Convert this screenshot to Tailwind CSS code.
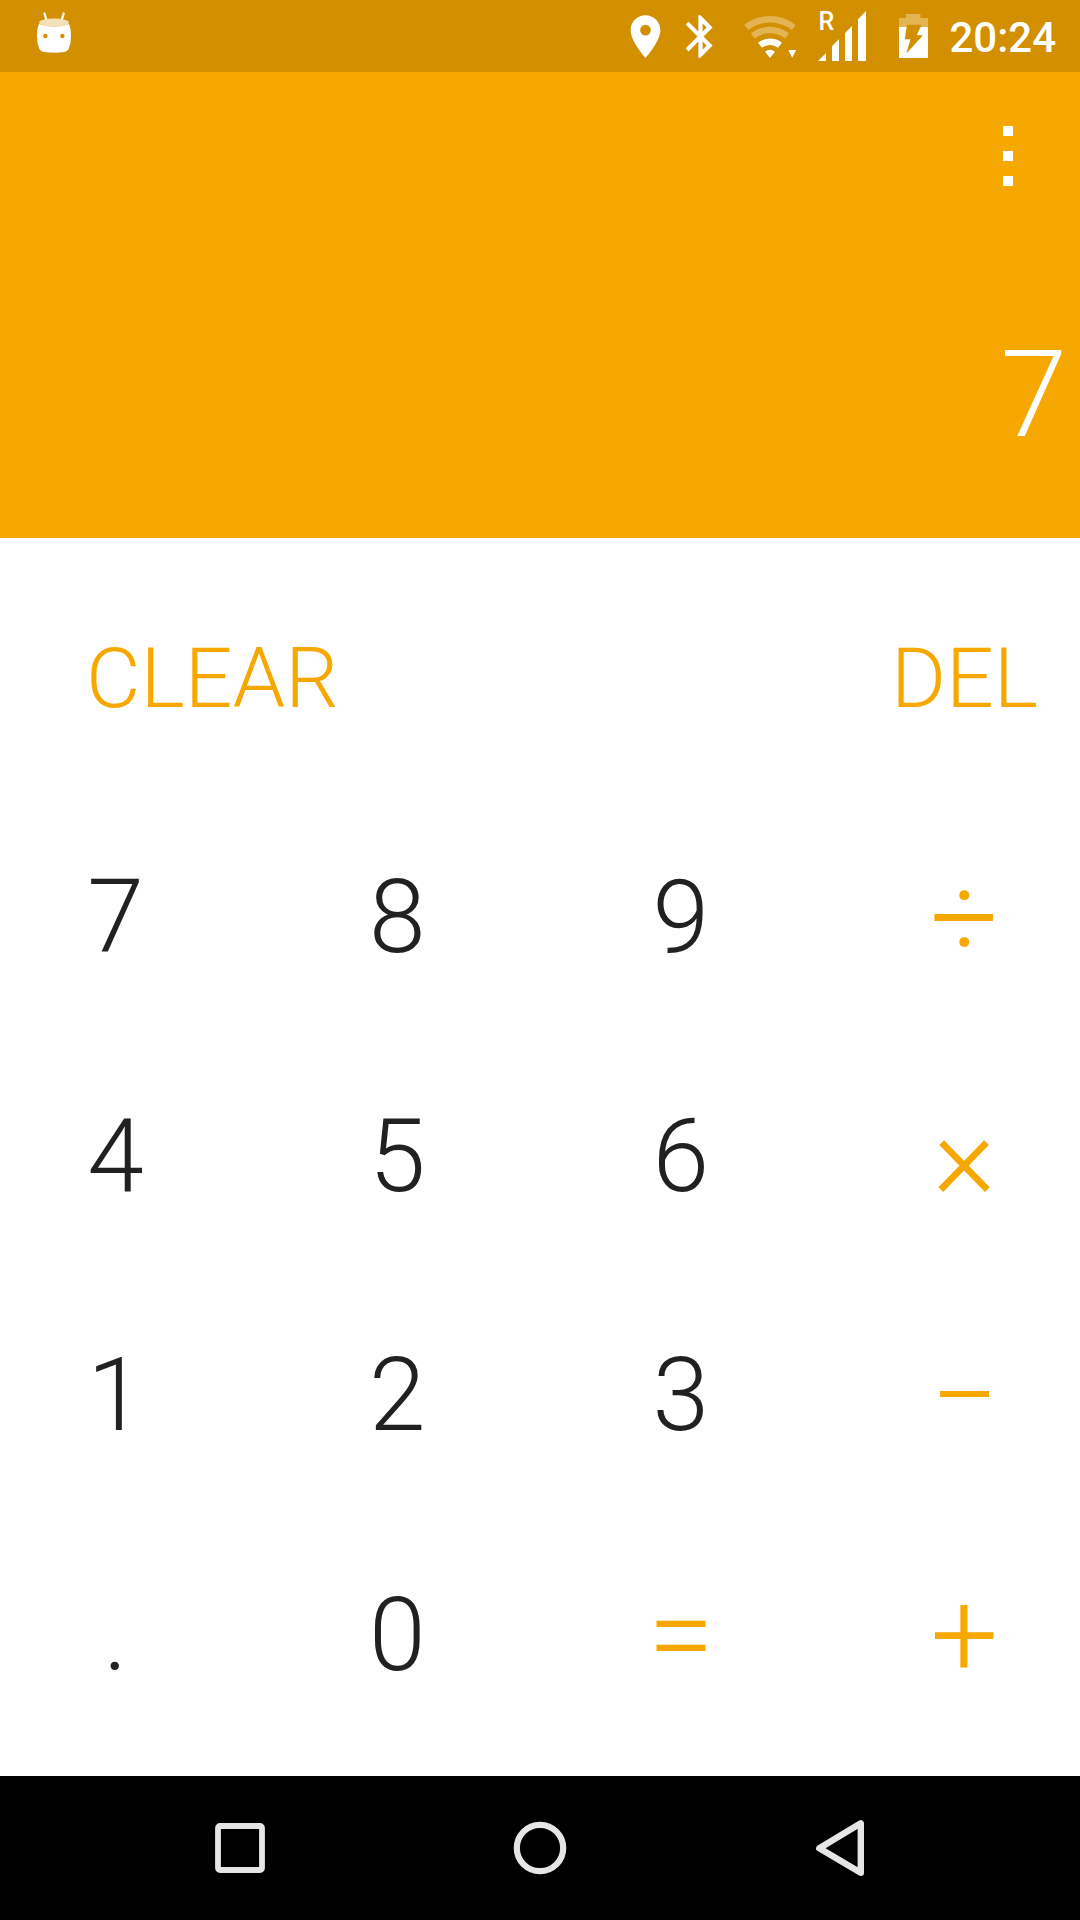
<!DOCTYPE html>
<html lang="en">
<head>
<meta charset="utf-8">
<title>Calculator</title>
<script src="https://cdn.jsdelivr.net/npm/@tailwindcss/browser@4"></script>
</head>
<body class="bg-white">
<div class="flex h-[1920px] w-[1080px] flex-col overflow-hidden font-['Roboto',sans-serif] text-[#212121]">
  <!-- Status bar -->
  <header class="flex h-[72px] shrink-0 items-start bg-[#d28f00] text-white">
    <svg class="ml-[36px] h-[72px] w-[36px]" viewBox="36 0 36 72">
      <path d="M44.5 13.5l2.4 8M63.7 13.5l-2.4 8" stroke="#fff" stroke-width="2.2" stroke-linecap="round"/>
      <path d="M39 24Q54 29 69 24Q71 28 71 36Q71 43 69 48Q68 51 64 52Q54 53.5 44 52Q40 51 39 48Q37 43 37 36Q37 28 39 24Z" fill="#fff"/>
      <ellipse cx="54" cy="22.6" rx="15" ry="4" fill="#f3e0ba"/>
      <circle cx="45.4" cy="36" r="2.2" fill="#d28f00"/><circle cx="62.4" cy="36" r="2.2" fill="#d28f00"/>
    </svg>
    <svg class="ml-auto mt-[10.75px] size-[51px]" viewBox="0 0 24 24" fill="#fff"><path d="M12 2C8.13 2 5 5.13 5 9c0 5.25 7 13 7 13s7-7.75 7-13c0-3.87-3.13-7-7-7zm0 9.5a2.5 2.5 0 0 1 0-5 2.5 2.5 0 0 1 0 5z"/></svg>
    <svg class="ml-[4px] mt-[10.75px] size-[51px]" viewBox="0 0 24 24" fill="#fff"><path d="M17.71 7.71L12 2h-1v7.59L6.41 5 5 6.41 10.59 12 5 17.59 6.41 19 11 14.41V22h1l5.71-5.71-4.3-4.29 4.3-4.29zM13 5.83l1.88 1.88L13 9.59V5.83zm1.88 10.46L13 18.17v-3.76l1.88 1.88z"/></svg>
    <svg class="ml-[14px] h-[72px] w-[60px]" viewBox="740 0 60 72" fill="none" stroke-width="6.4">
      <path d="M746.2 27.5A38.7 38.7 0 0 1 793.8 27.5M752.8 35.9A28 28 0 0 1 787.2 35.9" stroke="#e3b451"/>
      <path d="M760 45.2A16.3 16.3 0 0 1 780 45.2" stroke="#fff"/>
      <path d="M770 58L765 51.7A8 8 0 0 1 775 51.7ZM788.3 50H796.2L792.2 57.8Z" fill="#fff"/>
    </svg>
    <svg class="ml-[15px] h-[72px] w-[55px]" viewBox="815 0 55 72" fill="#fff">
      <path d="M818 61L826 53V61ZM832 61V46.3L839 39V61ZM845 61V33L852 26V61ZM858 61V19.3L866 11V61Z"/>
      <text x="818.6" y="30" font-size="25" font-weight="500">R</text>
    </svg>
    <svg class="ml-[25px] h-[72px] w-[38px]" viewBox="895 0 38 72">
      <path d="M906 14H920.5V18H928V27H899V18H906Z" fill="#e3b451"/>
      <path d="M899 27H928V58H899Z" fill="#fff"/>
      <path d="M907 24.7H921.5L916.7 35.3H923L906.3 53.5L910.5 39.3H904.8Z" fill="#d28f00"/>
    </svg>
    <time class="mr-[24px] ml-[16.5px] h-[72px] text-[42px] leading-[75px] font-medium">20:24</time>
  </header>

  <!-- Display -->
  <section class="flex h-[466px] shrink-0 flex-col items-end bg-[#f7a800] text-white">
    <button class="mt-[54px] mr-[67px] flex flex-col gap-[15px]" aria-label="More options">
      <span class="size-[10px] bg-white"></span><span class="size-[10px] bg-white"></span><span class="size-[10px] bg-white"></span>
    </button>
    <output class="mt-[138px] mr-[13px] text-[120px] leading-[142px] font-light">7</output>
  </section>

  <!-- Keypad -->
  <main class="grid h-[1238px] shrink-0 grid-rows-[repeat(5,239px)] pt-[21px] text-[102px] leading-[120px] font-light">
    <div class="flex items-center justify-between pr-[42px] pl-[86px] text-[84px] text-[#f7a800]"><button>CLEAR</button><button>DEL</button></div>
    <div class="flex items-center justify-between pr-[88px] pl-[87px] *:flex *:w-[57px] *:justify-center"><button class="pb-[2px]">7</button><button class="pr-[2px] pb-[2px]">8</button><button class="pb-[2px]">9</button><button class="pl-[2px] text-[120px] text-[#f7a800]">÷</button></div>
    <div class="flex items-center justify-between pr-[88px] pl-[87px] *:flex *:w-[57px] *:justify-center"><button class="pb-[2px]">4</button><button class="pr-[2px] pb-[2px]">5</button><button class="pb-[2px]">6</button><button class="pl-[2px] text-[120px] text-[#f7a800]">×</button></div>
    <div class="flex items-center justify-between pr-[88px] pl-[87px] *:flex *:w-[57px] *:justify-center"><button class="pb-[2px]">1</button><button class="pr-[2px] pb-[2px]">2</button><button class="pb-[2px]">3</button><button class="pl-[2px] text-[120px] text-[#f7a800]">−</button></div>
    <div class="flex items-center justify-between pr-[88px] pl-[87px] *:flex *:w-[57px] *:justify-center"><button>.</button><button class="pr-[2px]">0</button><button class="text-[120px] text-[#f7a800]">=</button><button class="pl-[2px] text-[120px] text-[#f7a800]">+</button></div>
  </main>

  <!-- Navigation bar -->
  <nav class="flex h-[144px] shrink-0 items-center justify-center gap-[240px] bg-black *:size-[60px]">
    <svg viewBox="0 0 60 60" fill="none" stroke="#e6e6e6" stroke-width="5.8"><rect x="8" y="8" width="44" height="44" rx="2"/></svg>
    <svg viewBox="0 0 60 60" fill="none" stroke="#e6e6e6" stroke-width="6.2"><circle cx="30" cy="30" r="23.2"/></svg>
    <svg viewBox="0 0 60 60" fill="none" stroke="#e6e6e6" stroke-width="6.4" stroke-linejoin="round"><path d="M9.3 30.3L50.8 5.3V54.8Z"/></svg>
  </nav>
</div>
</body>
</html>
